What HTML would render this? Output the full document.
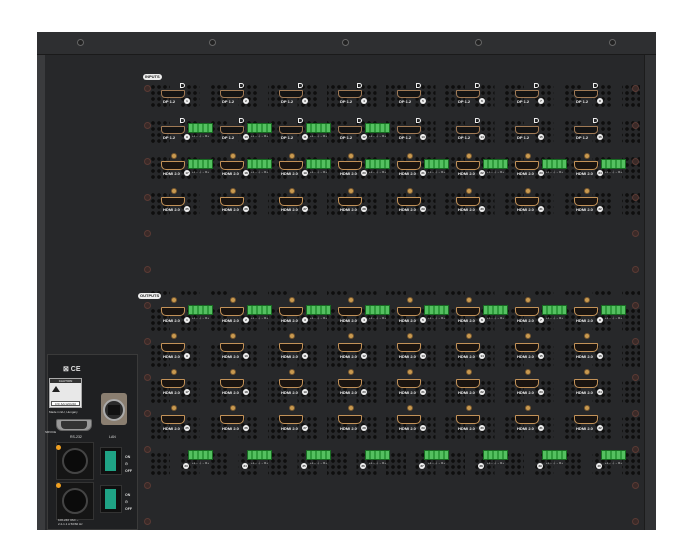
<!DOCTYPE html>
<html><head><meta charset="utf-8"><style>
*{margin:0;padding:0;box-sizing:border-box}
body{width:700px;height:551px;background:#fff;position:relative;overflow:hidden;font-family:"Liberation Sans",sans-serif}
.a{position:absolute}
#top{left:37px;top:32px;width:619px;height:23px;background:#2e2f31;border-bottom:1px solid #1a1a1a}
#body{left:37px;top:55px;width:619px;height:475px;background:#27282a}
#lstrip{left:37px;top:55px;width:8px;height:475px;background:#3a3b3d}
#rstrip{left:644px;top:55px;width:12px;height:475px;background:#313234;border-left:1px solid #1c1c1c}
.scr{position:absolute;width:7px;height:7px;border-radius:50%;border:1px solid #666;background:#222}
.bs{position:absolute;width:7px;height:7px;border-radius:50%;background:#3a2a28;border:1px solid #5a3a34}
.vent{position:absolute;background-image:radial-gradient(circle,#0e0e0e 1.6px,transparent 2.1px);background-size:6px 6px;-webkit-mask-image:repeating-linear-gradient(90deg,#000 0 20px,transparent 20px 29.5px),repeating-linear-gradient(0deg,#000 0 24px,transparent 24px 36px);-webkit-mask-composite:source-in;mask-image:repeating-linear-gradient(90deg,#000 0 20px,transparent 20px 29.5px),repeating-linear-gradient(0deg,#000 0 24px,transparent 24px 36px);mask-composite:intersect}
.col{position:absolute;top:0;width:58px;height:551px}
.col>*{position:absolute}
.dl{width:5px;height:5px;border:1.5px solid #eee;border-radius:0 3px 3px 0;left:19px}
.dp{left:0;width:24px;height:8px;background:#141414;border:1px solid #a07a55;border-radius:1px 1px 4px 4px}
.hd{left:0;width:24px;height:9px;background:#1a1410;border:1px solid #c39258;border-radius:1px 1px 5px 5px}
.lb{left:2px;font-size:4px;color:#eee;font-weight:bold;white-space:nowrap;line-height:5px}
.nm{left:23px;width:6px;height:6px;border-radius:50%;background:#eee;color:#222;font-size:3px;line-height:6px;text-align:center;font-weight:bold}
.g{left:27px;width:25px;height:10px;background:#2f9b3c;border:1px solid #186a22;background-image:repeating-linear-gradient(90deg,#54c060 0 3px,#2f9b3c 3px 5px)}
.pt{left:31px;font-size:3px;color:#ccc;white-space:nowrap}
.po{left:10px;width:6px;height:6px;border-radius:50%;background:#c99a50;border:1px solid #7a5a30}
.pill{position:absolute;background:#eee;color:#222;font-size:4px;font-weight:bold;border-radius:3px;padding:0 2px;line-height:6px}
</style></head><body>
<div id="top" class="a"></div>
<div id="body" class="a"></div>
<div id="lstrip" class="a"></div>
<div id="rstrip" class="a"></div>
<div class="scr" style="left:77px;top:39px"></div>
<div class="scr" style="left:209px;top:39px"></div>
<div class="scr" style="left:342px;top:39px"></div>
<div class="scr" style="left:475px;top:39px"></div>
<div class="scr" style="left:609px;top:39px"></div>

<div class="vent" style="left:150px;top:78px;width:490px;height:138px"></div>
<div class="vent" style="left:150px;top:290px;width:490px;height:186px"></div>

<div class="bs" style="left:144px;top:85px"></div><div class="bs" style="left:144px;top:122px"></div><div class="bs" style="left:144px;top:158px"></div><div class="bs" style="left:144px;top:194px"></div><div class="bs" style="left:144px;top:230px"></div><div class="bs" style="left:144px;top:266px"></div><div class="bs" style="left:144px;top:302px"></div><div class="bs" style="left:144px;top:338px"></div><div class="bs" style="left:144px;top:374px"></div><div class="bs" style="left:144px;top:410px"></div><div class="bs" style="left:144px;top:446px"></div><div class="bs" style="left:144px;top:482px"></div><div class="bs" style="left:144px;top:518px"></div>
<div class="bs" style="left:632px;top:85px"></div><div class="bs" style="left:632px;top:122px"></div><div class="bs" style="left:632px;top:158px"></div><div class="bs" style="left:632px;top:194px"></div><div class="bs" style="left:632px;top:230px"></div><div class="bs" style="left:632px;top:266px"></div><div class="bs" style="left:632px;top:302px"></div><div class="bs" style="left:632px;top:338px"></div><div class="bs" style="left:632px;top:374px"></div><div class="bs" style="left:632px;top:410px"></div><div class="bs" style="left:632px;top:446px"></div><div class="bs" style="left:632px;top:482px"></div><div class="bs" style="left:632px;top:518px"></div>

<div class="pill" style="left:143px;top:74px">INPUTS</div>
<div class="pill" style="left:138px;top:293px">OUTPUTS</div>

<div class="col" style="left:161px">
<div class="dl" style="top:83px"></div><div class="dp" style="top:90px"></div><div class="lb" style="top:99px">DP 1.2</div><div class="nm" style="top:98px">1</div>
<div class="dl" style="top:118px"></div><div class="dp" style="top:126px"></div><div class="lb" style="top:135px">DP 1.2</div><div class="nm" style="top:134px">9</div><div class="g" style="top:123px"></div><div class="pt" style="top:134px">+L − ⏚ − R+</div>
<div class="po" style="top:153px"></div><div class="hd" style="top:161px"></div><div class="lb" style="top:171px">HDMI 2.0</div><div class="nm" style="top:170px">17</div><div class="g" style="top:159px"></div><div class="pt" style="top:170px">+L − ⏚ − R+</div>
<div class="po" style="top:188px"></div><div class="hd" style="top:197px"></div><div class="lb" style="top:207px">HDMI 2.0</div><div class="nm" style="top:206px">25</div>
<div class="po" style="top:297px"></div><div class="hd" style="top:307px"></div><div class="lb" style="top:318px">HDMI 2.0</div><div class="nm" style="top:317px">1</div><div class="g" style="top:305px"></div><div class="pt" style="top:316px">+L − ⏚ − R+</div>
<div class="po" style="top:333px"></div><div class="hd" style="top:343px"></div><div class="lb" style="top:354px">HDMI 2.0</div><div class="nm" style="top:353px">9</div>
<div class="po" style="top:369px"></div><div class="hd" style="top:379px"></div><div class="lb" style="top:390px">HDMI 2.0</div><div class="nm" style="top:389px">17</div>
<div class="po" style="top:405px"></div><div class="hd" style="top:415px"></div><div class="lb" style="top:426px">HDMI 2.0</div><div class="nm" style="top:425px">25</div>
<div class="g" style="top:450px"></div><div class="nm" style="left:22px;top:463px">33</div><div class="pt" style="top:461px">+L − ⏚ − R+</div>
</div>
<div class="col" style="left:220px">
<div class="dl" style="top:83px"></div><div class="dp" style="top:90px"></div><div class="lb" style="top:99px">DP 1.2</div><div class="nm" style="top:98px">2</div>
<div class="dl" style="top:118px"></div><div class="dp" style="top:126px"></div><div class="lb" style="top:135px">DP 1.2</div><div class="nm" style="top:134px">10</div><div class="g" style="top:123px"></div><div class="pt" style="top:134px">+L − ⏚ − R+</div>
<div class="po" style="top:153px"></div><div class="hd" style="top:161px"></div><div class="lb" style="top:171px">HDMI 2.0</div><div class="nm" style="top:170px">18</div><div class="g" style="top:159px"></div><div class="pt" style="top:170px">+L − ⏚ − R+</div>
<div class="po" style="top:188px"></div><div class="hd" style="top:197px"></div><div class="lb" style="top:207px">HDMI 2.0</div><div class="nm" style="top:206px">26</div>
<div class="po" style="top:297px"></div><div class="hd" style="top:307px"></div><div class="lb" style="top:318px">HDMI 2.0</div><div class="nm" style="top:317px">2</div><div class="g" style="top:305px"></div><div class="pt" style="top:316px">+L − ⏚ − R+</div>
<div class="po" style="top:333px"></div><div class="hd" style="top:343px"></div><div class="lb" style="top:354px">HDMI 2.0</div><div class="nm" style="top:353px">10</div>
<div class="po" style="top:369px"></div><div class="hd" style="top:379px"></div><div class="lb" style="top:390px">HDMI 2.0</div><div class="nm" style="top:389px">18</div>
<div class="po" style="top:405px"></div><div class="hd" style="top:415px"></div><div class="lb" style="top:426px">HDMI 2.0</div><div class="nm" style="top:425px">26</div>
<div class="g" style="top:450px"></div><div class="nm" style="left:22px;top:463px">34</div><div class="pt" style="top:461px">+L − ⏚ − R+</div>
</div>
<div class="col" style="left:279px">
<div class="dl" style="top:83px"></div><div class="dp" style="top:90px"></div><div class="lb" style="top:99px">DP 1.2</div><div class="nm" style="top:98px">3</div>
<div class="dl" style="top:118px"></div><div class="dp" style="top:126px"></div><div class="lb" style="top:135px">DP 1.2</div><div class="nm" style="top:134px">11</div><div class="g" style="top:123px"></div><div class="pt" style="top:134px">+L − ⏚ − R+</div>
<div class="po" style="top:153px"></div><div class="hd" style="top:161px"></div><div class="lb" style="top:171px">HDMI 2.0</div><div class="nm" style="top:170px">19</div><div class="g" style="top:159px"></div><div class="pt" style="top:170px">+L − ⏚ − R+</div>
<div class="po" style="top:188px"></div><div class="hd" style="top:197px"></div><div class="lb" style="top:207px">HDMI 2.0</div><div class="nm" style="top:206px">27</div>
<div class="po" style="top:297px"></div><div class="hd" style="top:307px"></div><div class="lb" style="top:318px">HDMI 2.0</div><div class="nm" style="top:317px">3</div><div class="g" style="top:305px"></div><div class="pt" style="top:316px">+L − ⏚ − R+</div>
<div class="po" style="top:333px"></div><div class="hd" style="top:343px"></div><div class="lb" style="top:354px">HDMI 2.0</div><div class="nm" style="top:353px">11</div>
<div class="po" style="top:369px"></div><div class="hd" style="top:379px"></div><div class="lb" style="top:390px">HDMI 2.0</div><div class="nm" style="top:389px">19</div>
<div class="po" style="top:405px"></div><div class="hd" style="top:415px"></div><div class="lb" style="top:426px">HDMI 2.0</div><div class="nm" style="top:425px">27</div>
<div class="g" style="top:450px"></div><div class="nm" style="left:22px;top:463px">35</div><div class="pt" style="top:461px">+L − ⏚ − R+</div>
</div>
<div class="col" style="left:338px">
<div class="dl" style="top:83px"></div><div class="dp" style="top:90px"></div><div class="lb" style="top:99px">DP 1.2</div><div class="nm" style="top:98px">4</div>
<div class="dl" style="top:118px"></div><div class="dp" style="top:126px"></div><div class="lb" style="top:135px">DP 1.2</div><div class="nm" style="top:134px">12</div><div class="g" style="top:123px"></div><div class="pt" style="top:134px">+L − ⏚ − R+</div>
<div class="po" style="top:153px"></div><div class="hd" style="top:161px"></div><div class="lb" style="top:171px">HDMI 2.0</div><div class="nm" style="top:170px">20</div><div class="g" style="top:159px"></div><div class="pt" style="top:170px">+L − ⏚ − R+</div>
<div class="po" style="top:188px"></div><div class="hd" style="top:197px"></div><div class="lb" style="top:207px">HDMI 2.0</div><div class="nm" style="top:206px">28</div>
<div class="po" style="top:297px"></div><div class="hd" style="top:307px"></div><div class="lb" style="top:318px">HDMI 2.0</div><div class="nm" style="top:317px">4</div><div class="g" style="top:305px"></div><div class="pt" style="top:316px">+L − ⏚ − R+</div>
<div class="po" style="top:333px"></div><div class="hd" style="top:343px"></div><div class="lb" style="top:354px">HDMI 2.0</div><div class="nm" style="top:353px">12</div>
<div class="po" style="top:369px"></div><div class="hd" style="top:379px"></div><div class="lb" style="top:390px">HDMI 2.0</div><div class="nm" style="top:389px">20</div>
<div class="po" style="top:405px"></div><div class="hd" style="top:415px"></div><div class="lb" style="top:426px">HDMI 2.0</div><div class="nm" style="top:425px">28</div>
<div class="g" style="top:450px"></div><div class="nm" style="left:22px;top:463px">36</div><div class="pt" style="top:461px">+L − ⏚ − R+</div>
</div>
<div class="col" style="left:397px">
<div class="dl" style="top:83px"></div><div class="dp" style="top:90px"></div><div class="lb" style="top:99px">DP 1.2</div><div class="nm" style="top:98px">5</div>
<div class="dl" style="top:118px"></div><div class="dp" style="top:126px"></div><div class="lb" style="top:135px">DP 1.2</div><div class="nm" style="top:134px">13</div>
<div class="po" style="top:153px"></div><div class="hd" style="top:161px"></div><div class="lb" style="top:171px">HDMI 2.0</div><div class="nm" style="top:170px">21</div><div class="g" style="top:159px"></div><div class="pt" style="top:170px">+L − ⏚ − R+</div>
<div class="po" style="top:188px"></div><div class="hd" style="top:197px"></div><div class="lb" style="top:207px">HDMI 2.0</div><div class="nm" style="top:206px">29</div>
<div class="po" style="top:297px"></div><div class="hd" style="top:307px"></div><div class="lb" style="top:318px">HDMI 2.0</div><div class="nm" style="top:317px">5</div><div class="g" style="top:305px"></div><div class="pt" style="top:316px">+L − ⏚ − R+</div>
<div class="po" style="top:333px"></div><div class="hd" style="top:343px"></div><div class="lb" style="top:354px">HDMI 2.0</div><div class="nm" style="top:353px">13</div>
<div class="po" style="top:369px"></div><div class="hd" style="top:379px"></div><div class="lb" style="top:390px">HDMI 2.0</div><div class="nm" style="top:389px">21</div>
<div class="po" style="top:405px"></div><div class="hd" style="top:415px"></div><div class="lb" style="top:426px">HDMI 2.0</div><div class="nm" style="top:425px">29</div>
<div class="g" style="top:450px"></div><div class="nm" style="left:22px;top:463px">37</div><div class="pt" style="top:461px">+L − ⏚ − R+</div>
</div>
<div class="col" style="left:456px">
<div class="dl" style="top:83px"></div><div class="dp" style="top:90px"></div><div class="lb" style="top:99px">DP 1.2</div><div class="nm" style="top:98px">6</div>
<div class="dl" style="top:118px"></div><div class="dp" style="top:126px"></div><div class="lb" style="top:135px">DP 1.2</div><div class="nm" style="top:134px">14</div>
<div class="po" style="top:153px"></div><div class="hd" style="top:161px"></div><div class="lb" style="top:171px">HDMI 2.0</div><div class="nm" style="top:170px">22</div><div class="g" style="top:159px"></div><div class="pt" style="top:170px">+L − ⏚ − R+</div>
<div class="po" style="top:188px"></div><div class="hd" style="top:197px"></div><div class="lb" style="top:207px">HDMI 2.0</div><div class="nm" style="top:206px">30</div>
<div class="po" style="top:297px"></div><div class="hd" style="top:307px"></div><div class="lb" style="top:318px">HDMI 2.0</div><div class="nm" style="top:317px">6</div><div class="g" style="top:305px"></div><div class="pt" style="top:316px">+L − ⏚ − R+</div>
<div class="po" style="top:333px"></div><div class="hd" style="top:343px"></div><div class="lb" style="top:354px">HDMI 2.0</div><div class="nm" style="top:353px">14</div>
<div class="po" style="top:369px"></div><div class="hd" style="top:379px"></div><div class="lb" style="top:390px">HDMI 2.0</div><div class="nm" style="top:389px">22</div>
<div class="po" style="top:405px"></div><div class="hd" style="top:415px"></div><div class="lb" style="top:426px">HDMI 2.0</div><div class="nm" style="top:425px">30</div>
<div class="g" style="top:450px"></div><div class="nm" style="left:22px;top:463px">38</div><div class="pt" style="top:461px">+L − ⏚ − R+</div>
</div>
<div class="col" style="left:515px">
<div class="dl" style="top:83px"></div><div class="dp" style="top:90px"></div><div class="lb" style="top:99px">DP 1.2</div><div class="nm" style="top:98px">7</div>
<div class="dl" style="top:118px"></div><div class="dp" style="top:126px"></div><div class="lb" style="top:135px">DP 1.2</div><div class="nm" style="top:134px">15</div>
<div class="po" style="top:153px"></div><div class="hd" style="top:161px"></div><div class="lb" style="top:171px">HDMI 2.0</div><div class="nm" style="top:170px">23</div><div class="g" style="top:159px"></div><div class="pt" style="top:170px">+L − ⏚ − R+</div>
<div class="po" style="top:188px"></div><div class="hd" style="top:197px"></div><div class="lb" style="top:207px">HDMI 2.0</div><div class="nm" style="top:206px">31</div>
<div class="po" style="top:297px"></div><div class="hd" style="top:307px"></div><div class="lb" style="top:318px">HDMI 2.0</div><div class="nm" style="top:317px">7</div><div class="g" style="top:305px"></div><div class="pt" style="top:316px">+L − ⏚ − R+</div>
<div class="po" style="top:333px"></div><div class="hd" style="top:343px"></div><div class="lb" style="top:354px">HDMI 2.0</div><div class="nm" style="top:353px">15</div>
<div class="po" style="top:369px"></div><div class="hd" style="top:379px"></div><div class="lb" style="top:390px">HDMI 2.0</div><div class="nm" style="top:389px">23</div>
<div class="po" style="top:405px"></div><div class="hd" style="top:415px"></div><div class="lb" style="top:426px">HDMI 2.0</div><div class="nm" style="top:425px">31</div>
<div class="g" style="top:450px"></div><div class="nm" style="left:22px;top:463px">39</div><div class="pt" style="top:461px">+L − ⏚ − R+</div>
</div>
<div class="col" style="left:574px">
<div class="dl" style="top:83px"></div><div class="dp" style="top:90px"></div><div class="lb" style="top:99px">DP 1.2</div><div class="nm" style="top:98px">8</div>
<div class="dl" style="top:118px"></div><div class="dp" style="top:126px"></div><div class="lb" style="top:135px">DP 1.2</div><div class="nm" style="top:134px">16</div>
<div class="po" style="top:153px"></div><div class="hd" style="top:161px"></div><div class="lb" style="top:171px">HDMI 2.0</div><div class="nm" style="top:170px">24</div><div class="g" style="top:159px"></div><div class="pt" style="top:170px">+L − ⏚ − R+</div>
<div class="po" style="top:188px"></div><div class="hd" style="top:197px"></div><div class="lb" style="top:207px">HDMI 2.0</div><div class="nm" style="top:206px">32</div>
<div class="po" style="top:297px"></div><div class="hd" style="top:307px"></div><div class="lb" style="top:318px">HDMI 2.0</div><div class="nm" style="top:317px">8</div><div class="g" style="top:305px"></div><div class="pt" style="top:316px">+L − ⏚ − R+</div>
<div class="po" style="top:333px"></div><div class="hd" style="top:343px"></div><div class="lb" style="top:354px">HDMI 2.0</div><div class="nm" style="top:353px">16</div>
<div class="po" style="top:369px"></div><div class="hd" style="top:379px"></div><div class="lb" style="top:390px">HDMI 2.0</div><div class="nm" style="top:389px">24</div>
<div class="po" style="top:405px"></div><div class="hd" style="top:415px"></div><div class="lb" style="top:426px">HDMI 2.0</div><div class="nm" style="top:425px">32</div>
<div class="g" style="top:450px"></div><div class="nm" style="left:22px;top:463px">40</div><div class="pt" style="top:461px">+L − ⏚ − R+</div>
</div>

<div class="a" style="left:47px;top:354px;width:91px;height:176px;background:#1f2022;border:1px solid #3a3a3a"></div>
<div class="a" style="left:63px;top:365px;font-size:7px;color:#ddd;font-weight:bold">⊠ CE</div>
<div class="a" style="left:49px;top:378px;width:33px;height:30px;background:#e8e8e8;border:1px solid #aaa"></div>
<div class="a" style="left:50px;top:379px;width:31px;height:4px;background:#333;font-size:3px;color:#fff;text-align:center;line-height:4px">CAUTION</div>
<div class="a" style="left:52px;top:386px;width:0;height:0;border-left:4px solid transparent;border-right:4px solid transparent;border-bottom:6px solid #222"></div>
<div class="a" style="left:51px;top:401px;width:29px;height:5px;background:#fff;border:1px solid #555;font-size:3px;line-height:4px;color:#333;text-align:center">0.5/.6A/120/240</div>
<div class="a" style="left:49px;top:410px;font-size:3px;color:#ddd">Made in EU, Hungary</div>
<div class="a" style="left:56px;top:419px;width:36px;height:12px;background:#999;border-radius:2px 2px 6px 6px;border:1px solid #666"></div>
<div class="a" style="left:61px;top:421px;width:26px;height:8px;background:#333;border-radius:1px 1px 4px 4px"></div>
<div class="a" style="left:45px;top:430px;font-size:3px;color:#ddd">SRVICE</div>
<div class="a" style="left:70px;top:435px;font-size:3.5px;color:#ddd">RS-232</div>
<div class="a" style="left:101px;top:393px;width:26px;height:32px;background:#8a7e70;border-radius:3px"></div>
<div class="a" style="left:103px;top:399px;width:22px;height:22px;border-radius:50%;background:#2a2a2a;border:2px solid #aaa"></div>
<div class="a" style="left:108px;top:405px;width:12px;height:10px;background:#111"></div>
<div class="a" style="left:109px;top:435px;font-size:3.5px;color:#ddd">LAN</div>
<div class="a" style="left:56px;top:442px;width:38px;height:38px;background:#151515;border:1px solid #333"></div>
<div class="a" style="left:62px;top:448px;width:26px;height:26px;border-radius:50%;background:#0b0b0b;border:2px solid #444"></div>
<div class="a" style="left:56px;top:482px;width:38px;height:38px;background:#151515;border:1px solid #333"></div>
<div class="a" style="left:62px;top:488px;width:26px;height:26px;border-radius:50%;background:#0b0b0b;border:2px solid #444"></div>
<div class="a" style="left:56px;top:445px;width:5px;height:5px;border-radius:50%;background:#f0a020"></div>
<div class="a" style="left:56px;top:483px;width:5px;height:5px;border-radius:50%;background:#f0a020"></div>
<div class="a" style="left:100px;top:447px;width:22px;height:28px;background:#101010;border:1px solid #333"></div>
<div class="a" style="left:105px;top:451px;width:11px;height:20px;background:#1fa385"></div>
<div class="a" style="left:100px;top:485px;width:22px;height:28px;background:#101010;border:1px solid #333"></div>
<div class="a" style="left:105px;top:489px;width:11px;height:20px;background:#1fa385"></div>
<div class="a" style="left:125px;top:454px;font-size:3.5px;color:#ddd;line-height:7px;font-weight:bold">ON<br>⏻<br>OFF</div>
<div class="a" style="left:125px;top:492px;font-size:3.5px;color:#ddd;line-height:7px;font-weight:bold">ON<br>⏻<br>OFF</div>
<div class="a" style="left:58px;top:518px;font-size:3px;color:#ddd;line-height:4px">100-240 VAC ~<br>2.2-1.1 A 50/60 Hz</div>
</body></html>
